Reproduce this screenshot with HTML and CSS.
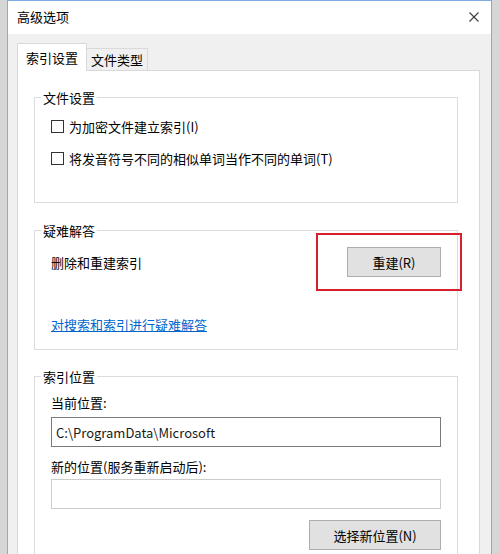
FILE: index.html
```html
<!DOCTYPE html>
<html lang="zh-CN">
<head>
    <meta charset="UTF-8">
    <meta name="viewport" content="width=device-width, initial-scale=1.0">
    <title>高级选项</title>
    <link rel="stylesheet" href="styles.css">
</head>
<body>
    <div class="window">
        <div class="titlebar">
            <span class="title">高级选项</span>
            <svg class="close" width="10" height="10" viewBox="0 0 10 10">
                <path d="M0.5 0.5 L9.5 9.5 M9.5 0.5 L0.5 9.5" stroke="#3c3c3c" stroke-width="1.1" fill="none"/>
            </svg>
        </div>

        <div class="dialog">
            <div class="tabs">
                <div class="tab active">索引设置</div>
                <div class="tab">文件类型</div>
            </div>

            <div class="panel">
                <fieldset class="group group-files">
                    <legend>文件设置</legend>
                    <label class="check-row">
                        <input type="checkbox">
                        <span>为加密文件建立索引(I)</span>
                    </label>
                    <label class="check-row">
                        <input type="checkbox">
                        <span>将发音符号不同的相似单词当作不同的单词(T)</span>
                    </label>
                </fieldset>

                <fieldset class="group group-trouble">
                    <legend>疑难解答</legend>
                    <div class="rebuild-row">
                        <span>删除和重建索引</span>
                        <div class="rebuild-wrap">
                            <button class="btn btn-rebuild">重建(R)</button>
                            <div class="highlight"></div>
                        </div>
                    </div>
                    <a href="#" class="link">对搜索和索引进行疑难解答</a>
                </fieldset>

                <fieldset class="group group-location">
                    <legend>索引位置</legend>
                    <div class="field-label">当前位置:</div>
                    <input class="text-box" type="text" value="C:\ProgramData\Microsoft" readonly>
                    <div class="field-label second">新的位置(服务重新启动后):</div>
                    <input class="text-box disabled" type="text" disabled>
                    <div class="btn-row">
                        <button class="btn btn-select">选择新位置(N)</button>
                    </div>
                </fieldset>
            </div>
        </div>
    </div>
</body>
</html>
```

FILE: styles.css
```css
html, body {
    height: 100%;
    overflow: hidden;
}
body {
    margin: 0;
    background: #d6d6d6;
    font-family: "Noto Sans CJK SC", "Noto Sans", sans-serif;
    font-size: 13px;
    line-height: 17px;
    color: #000;
}
.window {
    margin-left: 7px;
    width: 483px;
    height: 553px;
    border: 1px solid #7eaee0;
    border-bottom: none;
    background: #f0f0f0;
    overflow: hidden;
}
.titlebar {
    height: 33px;
    box-sizing: border-box;
    padding: 7px 12px 0 9px;
    background: #fff;
    display: flex;
    justify-content: space-between;
    align-items: flex-start;
}
.title {
    color: #000;
}
.close {
    margin-top: 4px;
}
.dialog {
    padding: 9px 10px 0 9px;
}
.tabs {
    display: flex;
    align-items: flex-end;
    height: 27px;
}
.tab {
    box-sizing: border-box;
    height: 22px;
    padding: 2px 4px 0;
    border: 1px solid #d9d9d9;
    border-left: none;
    border-bottom: none;
    background: #f0f0f0;
    color: #000;
}
.tab.active {
    position: relative;
    z-index: 1;
    height: 28px;
    margin-bottom: -1px;
    padding: 5px 8px 0;
    border-left: 1px solid #d9d9d9;
    background: #fff;
}
.panel {
    width: 463px;
    box-sizing: border-box;
    background: #fff;
    border: 1px solid #d9d9d9;
    padding: 18px 21px 40px 16px;
}
.group {
    margin: 0;
    padding: 0 16px;
    border: 1px solid #dcdcdc;
    min-width: 0;
}
.group legend {
    margin-left: -10px;
    padding: 0 2px;
    line-height: 17px;
    color: #000;
}
.group-files {
    padding-top: 10px;
    padding-bottom: 34px;
}
.check-row {
    display: flex;
    align-items: center;
    height: 20px;
    gap: 5px;
}
.check-row + .check-row {
    margin-top: 12px;
}
.check-row input {
    appearance: none;
    -webkit-appearance: none;
    width: 13px;
    height: 13px;
    margin: 0;
    border: 1px solid #333;
    background: #fff;
}
.group-trouble {
    margin-top: 19px;
    padding-top: 8px;
    padding-bottom: 16px;
}
.rebuild-row {
    display: flex;
    justify-content: space-between;
    align-items: center;
}
.rebuild-wrap {
    position: relative;
}
.highlight {
    position: absolute;
    left: -31px;
    top: -14px;
    width: 146px;
    height: 58px;
    box-sizing: border-box;
    border: 2px solid #d7202b;
}
.link {
    display: block;
    margin-top: 39px;
    color: #0066cc;
    text-decoration: underline;
    width: max-content;
}
.btn {
    display: block;
    height: 30px;
    box-sizing: border-box;
    background: #e1e1e1;
    border: 1px solid #adadad;
    font-family: inherit;
    font-size: 13px;
    color: #000;
    padding: 0;
}
.btn-rebuild {
    width: 94px;
}
.group-location {
    margin-top: 18px;
    padding-top: 9px;
    padding-bottom: 40px;
}
.field-label.second {
    margin-top: 11px;
}
.text-box {
    display: block;
    width: 100%;
    height: 30px;
    box-sizing: border-box;
    margin: 6px 0 0;
    padding: 0 4px;
    border: 1px solid #7a7a7a;
    background: #fff;
    font-family: inherit;
    font-size: 13px;
    color: #1a1a1a;
    outline: none;
}
.text-box.disabled {
    margin-top: 4px;
    border-color: #cccccc;
    background: #fff;
}
.btn-row {
    display: flex;
    justify-content: flex-end;
    margin-top: 11px;
}
.btn-select {
    width: 132px;
}
```
